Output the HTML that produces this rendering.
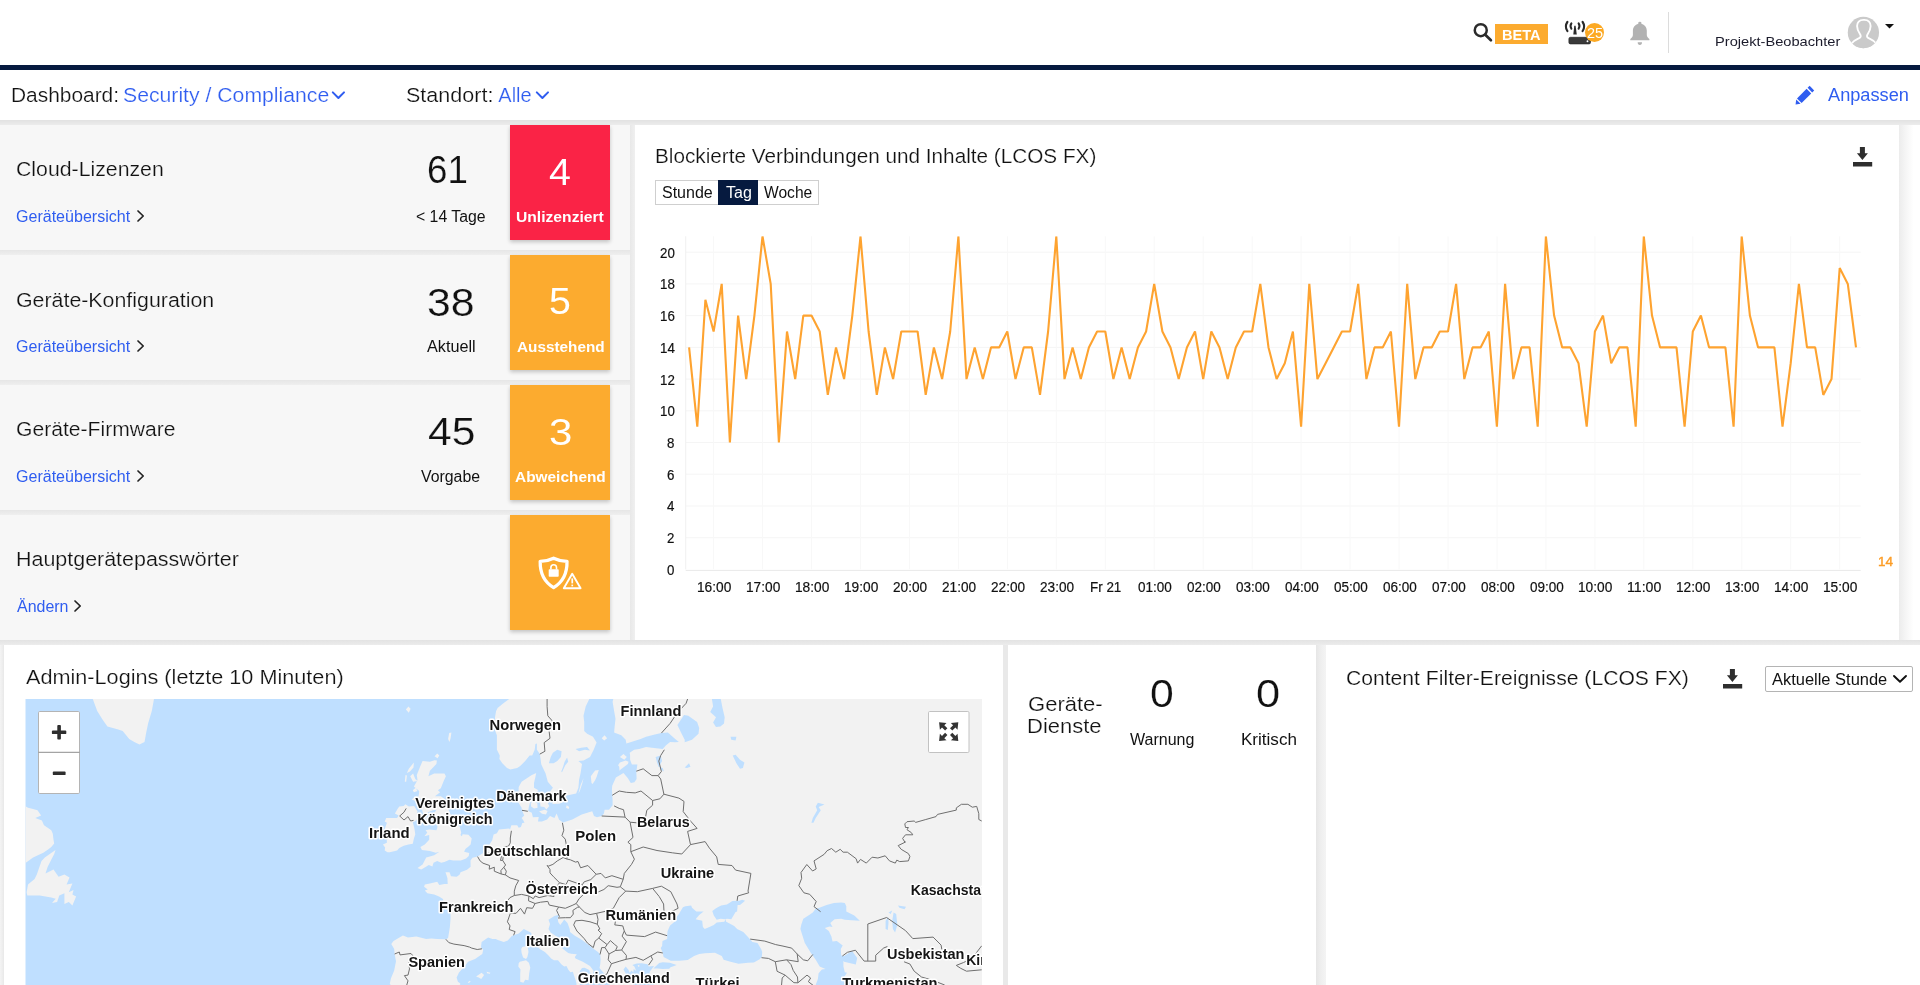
<!DOCTYPE html>
<html lang="de"><head><meta charset="utf-8"><title>Dashboard</title>
<style>
*{box-sizing:border-box}
html,body{margin:0;padding:0}
body{width:1920px;height:985px;overflow:hidden;position:relative;background:#f7f7f7;font-family:"Liberation Sans",sans-serif;color:#212121}
.lt{-webkit-text-stroke:.2px #fff}.lc{-webkit-text-stroke:.2px #f7f7f7}.t{position:absolute;white-space:nowrap;line-height:1;display:block;transform-origin:0 0}
#app{position:absolute;left:0;top:0;width:1920px;height:985px;overflow:hidden;will-change:transform}
.abs{position:absolute}
svg{position:absolute;overflow:visible}
.panel{position:absolute;background:#fff}
.card{position:absolute;left:0;width:630px;height:125px;background:#f7f7f7}
.tile{position:absolute;left:510px;width:100px;height:115px;box-shadow:0 2px 4px rgba(0,0,0,.22)}
</style></head>
<body>
<main id="app">
<div class="abs" style="left:0;top:0;width:1920px;height:985px;background:#e9e9e9"></div>
<header class="abs" style="left:0;top:0;width:1920px;height:65px;background:#fff"></header>
<div class="abs" style="left:0;top:65px;width:1920px;height:5px;background:#061a3f"></div>
<nav class="abs" style="left:0;top:70px;width:1920px;height:50px;background:#fff"></nav>
<div class="abs" style="left:0;top:120px;width:1920px;height:5px;background:linear-gradient(#e2e2e2,#ececec)"></div>
<svg style="left:1470px;top:19px" width="26" height="26" viewBox="0 0 26 26"><circle cx="10.75" cy="11.2" r="6.0" fill="none" stroke="#2b2b2b" stroke-width="2.5"/><path d="M15.3 15.8 L20.9 21.3" stroke="#2b2b2b" stroke-width="2.7" stroke-linecap="round"/></svg>
<div class="abs" style="left:1495px;top:24px;width:53px;height:20px;background:#fcab2f"></div>
<span class="t" style="left:1502.26px;top:26.80px;font-size:15.5px;color:#fff;font-weight:700;transform:scaleX(0.9413);">BETA</span>
<svg style="left:1560px;top:16px" width="36" height="32" viewBox="1560 16 36 32">
<rect x="1568.9" y="37.3" width="21.6" height="6.6" rx="1.5" fill="#3a3a3a" stroke="#2a2a2a" stroke-width="0.7"/>
<circle cx="1587.5" cy="41.3" r="0.95" fill="#fff"/>
<path d="M1574.3 25.8 L1575.6 25.8 L1576.8 34.6 L1573.3 34.6 Z" fill="#2a2a2a"/>
<path d="M1571.4 23.4 Q1569.6 26 1571.4 28.7 M1578.6 23.4 Q1580.4 26 1578.6 28.7" fill="none" stroke="#2a2a2a" stroke-width="2" stroke-linecap="round"/>
<path d="M1567.4 21.8 Q1564.4 26.4 1567.4 31 M1582.6 21.8 Q1585.6 26.4 1582.6 31" fill="none" stroke="#2a2a2a" stroke-width="2.2" stroke-linecap="round"/>
</svg>
<div class="abs" style="left:1584.8px;top:22.9px;width:19.5px;height:19.5px;border-radius:50%;background:#fca923"></div>
<span class="t" style="left:1586.53px;top:26.10px;font-size:14px;color:#fff;transform:scaleX(1.0316);">25</span>
<svg style="left:1626px;top:18px" width="28" height="30" viewBox="1626 18 28 30">
<path d="M1638.3 22.7 Q1638.3 21.8 1639.85 21.8 Q1641.4 21.8 1641.4 22.7 L1641.4 23.7 C1644.6 24.6 1646.8 27.2 1646.8 30.6 L1646.8 34.8 C1646.8 36.6 1647.7 37.6 1649.4 39 L1649.4 40.3 L1630.3 40.3 L1630.3 39 C1632 37.6 1632.9 36.6 1632.9 34.8 L1632.9 30.6 C1632.9 27.2 1635.1 24.6 1638.3 23.7 Z" fill="#b2b2b2"/>
<path d="M1637.7 42.2 L1642 42.2 A2.15 2.7 0 0 1 1637.7 42.2 Z" fill="#b2b2b2"/>
</svg>
<div class="abs" style="left:1668px;top:12px;width:1px;height:41px;background:#dcdcdc"></div>
<span class="t" style="left:1714.87px;top:35.00px;font-size:13px;color:#1b1b2b;transform:scaleX(1.1260);">Projekt-Beobachter</span>
<svg style="left:1847px;top:16px" width="33" height="33" viewBox="0 0 33 33">
<defs><clipPath id="avc"><circle cx="16.4" cy="16.5" r="15.65"/></clipPath></defs>
<circle cx="16.4" cy="16.5" r="15.65" fill="#cacaca"/>
<g clip-path="url(#avc)"><path d="M16.85 3.9 C12.2 3.7 10 6.4 10.1 10.2 C10.2 13.4 11.4 15.8 12.8 17.8 C13.8 19.2 14 20.4 13.2 21.4 C12 23 7 23.4 4.4 27.8 L3 34 L30.7 34 L29.3 27.8 C26.7 23.4 21.7 23 20.5 21.4 C19.7 20.4 19.9 19.2 20.9 17.8 C22.3 15.8 23.5 13.4 23.6 10.2 C23.7 6.4 21.5 3.7 16.85 3.9 Z" fill="#cacaca" stroke="#fff" stroke-width="1.9"/></g>
</svg>
<svg style="left:1885px;top:24px" width="10" height="6" viewBox="0 0 10 6"><path d="M0 0 L9 0 L4.5 4.6 Z" fill="#111"/></svg>
<span class="t lt" style="left:11.30px;top:85.10px;font-size:20px;color:#121212;transform:scaleX(1.0450);">Dashboard:</span>
<span class="t lt" style="left:123.47px;top:85.10px;font-size:20px;color:#2f5df0;transform:scaleX(1.0604);">Security / Compliance</span>
<svg style="left:331px;top:90px" width="15" height="11" viewBox="0 0 15 11"><path d="M1.8 2.4 L7.4 8 L13 2.4" fill="none" stroke="#2f5df0" stroke-width="2" stroke-linecap="round" stroke-linejoin="round"/></svg>
<span class="t lt" style="left:406.06px;top:85.10px;font-size:20px;color:#121212;transform:scaleX(1.0764);">Standort:</span>
<span class="t lt" style="left:498.30px;top:85.10px;font-size:20px;color:#2f5df0;transform:scaleX(1.0000);">Alle</span>
<svg style="left:535px;top:90px" width="15" height="11" viewBox="0 0 15 11"><path d="M1.8 2.4 L7.4 8 L13 2.4" fill="none" stroke="#2f5df0" stroke-width="2" stroke-linecap="round" stroke-linejoin="round"/></svg>
<svg style="left:1794px;top:84px" width="22" height="22" viewBox="0 0 22 22">
<g fill="#2f5df0"><path d="M15.6 1.8 L20.2 6.4 L18.2 8.4 L13.6 3.8 Z"/><path d="M12.6 4.8 L17.2 9.4 L7.6 19 L3 14.4 Z"/><path d="M2.2 15.4 L6.6 19.8 L1.6 20.4 Z"/></g></svg>
<span class="t" style="left:1827.80px;top:87.00px;font-size:17.5px;color:#2f5df0;transform:scaleX(1.0397);">Anpassen</span>
<div class="abs" style="left:630px;top:125px;width:5px;height:515px;background:linear-gradient(90deg,#e8e8e8,#f0f0f0)"></div>
<section class="card" style="top:125px"></section>
<div class="abs" style="left:0;top:250px;width:630px;height:5px;background:linear-gradient(#e6e6e6,#efefef)"></div>
<span class="t lc" style="left:16.21px;top:159.90px;font-size:19.5px;color:#121212;transform:scaleX(1.0904);">Cloud-Lizenzen</span>
<span class="t" style="left:16.45px;top:208.60px;font-size:16px;color:#2f5df0;transform:scaleX(1.0027);">Geräteübersicht</span>
<svg style="left:135.2px;top:209px" width="12" height="14" viewBox="0 0 12 14"><path d="M3 2 L8.2 7 L3 12" fill="none" stroke="#222" stroke-width="1.7" stroke-linecap="round" stroke-linejoin="round"/></svg>
<span class="t lc" style="left:427.19px;top:150.90px;font-size:38px;color:#111;transform:scaleX(0.9662);">61</span>
<span class="t" style="left:415.66px;top:208.60px;font-size:16px;color:#111;transform:scaleX(0.9870);">&lt; 14 Tage</span>
<div class="tile" style="top:125px;background:#fa2346"></div>
<span class="t" style="left:549.07px;top:154.00px;font-size:37px;color:#fff;transform:scaleX(1.0631);">4</span>
<span class="t" style="left:515.62px;top:208.60px;font-size:15.5px;color:#fff;font-weight:700;transform:scaleX(1.0093);">Unlizenziert</span>
<section class="card" style="top:255px"></section>
<div class="abs" style="left:0;top:380px;width:630px;height:5px;background:linear-gradient(#e6e6e6,#efefef)"></div>
<span class="t lc" style="left:16.21px;top:290.60px;font-size:19.5px;color:#121212;transform:scaleX(1.0948);">Geräte-Konfiguration</span>
<span class="t" style="left:16.45px;top:338.60px;font-size:16px;color:#2f5df0;transform:scaleX(1.0027);">Geräteübersicht</span>
<svg style="left:135.2px;top:339px" width="12" height="14" viewBox="0 0 12 14"><path d="M3 2 L8.2 7 L3 12" fill="none" stroke="#222" stroke-width="1.7" stroke-linecap="round" stroke-linejoin="round"/></svg>
<span class="t lc" style="left:427.31px;top:283.80px;font-size:38px;color:#111;transform:scaleX(1.1246);">38</span>
<span class="t" style="left:426.60px;top:338.60px;font-size:16px;color:#111;transform:scaleX(1.0128);">Aktuell</span>
<div class="tile" style="top:255px;background:#fcab2f"></div>
<span class="t" style="left:549.11px;top:283.30px;font-size:37px;color:#fff;transform:scaleX(1.0629);">5</span>
<span class="t" style="left:516.63px;top:338.60px;font-size:15.5px;color:#fff;font-weight:700;transform:scaleX(0.9877);">Ausstehend</span>
<section class="card" style="top:385px"></section>
<div class="abs" style="left:0;top:510px;width:630px;height:5px;background:linear-gradient(#e6e6e6,#efefef)"></div>
<span class="t lc" style="left:16.22px;top:420.40px;font-size:19.5px;color:#121212;transform:scaleX(1.0825);">Geräte-Firmware</span>
<span class="t" style="left:16.45px;top:468.60px;font-size:16px;color:#2f5df0;transform:scaleX(1.0027);">Geräteübersicht</span>
<svg style="left:135.2px;top:469px" width="12" height="14" viewBox="0 0 12 14"><path d="M3 2 L8.2 7 L3 12" fill="none" stroke="#222" stroke-width="1.7" stroke-linecap="round" stroke-linejoin="round"/></svg>
<span class="t lc" style="left:427.62px;top:413.20px;font-size:38px;color:#111;transform:scaleX(1.1220);">45</span>
<span class="t" style="left:420.98px;top:468.60px;font-size:16px;color:#111;transform:scaleX(0.9902);">Vorgabe</span>
<div class="tile" style="top:385px;background:#fcab2f"></div>
<span class="t" style="left:548.54px;top:413.70px;font-size:37px;color:#fff;transform:scaleX(1.1348);">3</span>
<span class="t" style="left:514.83px;top:468.60px;font-size:15.5px;color:#fff;font-weight:700;transform:scaleX(0.9944);">Abweichend</span>
<section class="card" style="top:515px"></section>
<span class="t lc" style="left:15.51px;top:549.80px;font-size:19.5px;color:#121212;transform:scaleX(1.0994);">Hauptgerätepasswörter</span>
<span class="t" style="left:16.90px;top:598.60px;font-size:16px;color:#2f5df0;transform:scaleX(0.9975);">Ändern</span>
<svg style="left:72.2px;top:599px" width="12" height="14" viewBox="0 0 12 14"><path d="M3 2 L8.2 7 L3 12" fill="none" stroke="#222" stroke-width="1.7" stroke-linecap="round" stroke-linejoin="round"/></svg>
<div class="tile" style="top:515px;background:#fcab2f"></div>
<svg style="left:536px;top:554px" width="50" height="40" viewBox="0 0 50 40">
<path d="M17.6 4.2 C13.2 6.4 8.6 7.2 4.2 7.4 C4 17 6.4 27 17.6 33.6 C28.8 27 31.2 17 31 7.4 C26.6 7.2 22 6.4 17.6 4.2 Z" fill="none" stroke="#fff" stroke-width="3.3" stroke-linejoin="round"/>
<rect x="12.7" y="15.2" width="10" height="7.6" rx="0.8" fill="#fff"/>
<path d="M14.9 15.6 L14.9 13.6 A2.8 2.8 0 0 1 20.5 13.6 L20.5 15.6" fill="none" stroke="#fff" stroke-width="1.6"/>
<path d="M36.2 17.6 L46.4 35.2 L26 35.2 Z" fill="#fcab2f" stroke="#fcab2f" stroke-width="3" stroke-linejoin="round"/>
<path d="M36.2 19.8 L44.6 34.2 L27.8 34.2 Z" fill="none" stroke="#fff" stroke-width="1.9" stroke-linejoin="round"/>
<rect x="35.4" y="24.4" width="1.7" height="5" fill="#fff"/><rect x="35.4" y="30.6" width="1.7" height="1.7" fill="#fff"/>
</svg>
<section class="panel" style="left:635px;top:125px;width:1264px;height:515px"></section>
<div class="abs" style="left:1899px;top:125px;width:21px;height:515px;background:linear-gradient(90deg,#ececec 0,#f6f6f6 35%,#fff 70%)"></div>
<div class="abs" style="left:0;top:640px;width:1920px;height:5px;background:linear-gradient(#e3e3e3,#ececec)"></div>
<span class="t lt" style="left:654.82px;top:146.40px;font-size:20px;color:#121212;transform:scaleX(1.0365);">Blockierte Verbindungen und Inhalte (LCOS FX)</span>
<div class="abs" style="left:655px;top:180px;width:164px;height:25px;border:1px solid #cfcfcf;background:#fff"></div>
<div class="abs" style="left:718px;top:180px;width:40px;height:25px;background:#061a3f"></div>
<span class="t" style="left:661.75px;top:184.50px;font-size:16px;color:#111;transform:scaleX(1.0005);">Stunde</span>
<span class="t" style="left:725.82px;top:184.50px;font-size:16px;color:#fff;transform:scaleX(1.0010);">Tag</span>
<span class="t" style="left:764.28px;top:184.50px;font-size:16px;color:#111;transform:scaleX(0.9744);">Woche</span>
<svg style="left:1852.8px;top:147.2px" width="20" height="20" viewBox="0 0 20 20"><path d="M6.9 0 L11.9 0 L11.9 6.2 L14.9 6.2 L9.4 12.9 L3.9 6.2 L6.9 6.2 Z" fill="#2e2e2e"/><rect x="0" y="15" width="19.2" height="4.5" fill="#2e2e2e"/></svg>
<svg style="left:0;top:0" width="1920" height="985" viewBox="0 0 1920 985"><path d="M685.7 570.4 H1860.7" stroke="#e9e9e9" stroke-width="1" fill="none"/><path d="M685.7 537.7 H1860.7" stroke="#f5f5f5" stroke-width="1" fill="none"/><path d="M685.7 506.0 H1860.7" stroke="#f5f5f5" stroke-width="1" fill="none"/><path d="M685.7 474.2 H1860.7" stroke="#f5f5f5" stroke-width="1" fill="none"/><path d="M685.7 442.5 H1860.7" stroke="#f5f5f5" stroke-width="1" fill="none"/><path d="M685.7 410.8 H1860.7" stroke="#f5f5f5" stroke-width="1" fill="none"/><path d="M685.7 379.1 H1860.7" stroke="#f5f5f5" stroke-width="1" fill="none"/><path d="M685.7 347.4 H1860.7" stroke="#f5f5f5" stroke-width="1" fill="none"/><path d="M685.7 315.6 H1860.7" stroke="#f5f5f5" stroke-width="1" fill="none"/><path d="M685.7 283.9 H1860.7" stroke="#f5f5f5" stroke-width="1" fill="none"/><path d="M685.7 252.2 H1860.7" stroke="#f5f5f5" stroke-width="1" fill="none"/><path d="M713.6 236.3 V569.4" stroke="#f8f8f8" stroke-width="1" fill="none"/><path d="M762.6 236.3 V569.4" stroke="#f8f8f8" stroke-width="1" fill="none"/><path d="M811.5 236.3 V569.4" stroke="#f8f8f8" stroke-width="1" fill="none"/><path d="M860.5 236.3 V569.4" stroke="#f8f8f8" stroke-width="1" fill="none"/><path d="M909.4 236.3 V569.4" stroke="#f8f8f8" stroke-width="1" fill="none"/><path d="M958.4 236.3 V569.4" stroke="#f8f8f8" stroke-width="1" fill="none"/><path d="M1007.4 236.3 V569.4" stroke="#f8f8f8" stroke-width="1" fill="none"/><path d="M1056.3 236.3 V569.4" stroke="#f8f8f8" stroke-width="1" fill="none"/><path d="M1105.3 236.3 V569.4" stroke="#f8f8f8" stroke-width="1" fill="none"/><path d="M1154.2 236.3 V569.4" stroke="#f8f8f8" stroke-width="1" fill="none"/><path d="M1203.2 236.3 V569.4" stroke="#f8f8f8" stroke-width="1" fill="none"/><path d="M1252.2 236.3 V569.4" stroke="#f8f8f8" stroke-width="1" fill="none"/><path d="M1301.1 236.3 V569.4" stroke="#f8f8f8" stroke-width="1" fill="none"/><path d="M1350.1 236.3 V569.4" stroke="#f8f8f8" stroke-width="1" fill="none"/><path d="M1399.0 236.3 V569.4" stroke="#f8f8f8" stroke-width="1" fill="none"/><path d="M1448.0 236.3 V569.4" stroke="#f8f8f8" stroke-width="1" fill="none"/><path d="M1497.0 236.3 V569.4" stroke="#f8f8f8" stroke-width="1" fill="none"/><path d="M1545.9 236.3 V569.4" stroke="#f8f8f8" stroke-width="1" fill="none"/><path d="M1594.9 236.3 V569.4" stroke="#f8f8f8" stroke-width="1" fill="none"/><path d="M1643.8 236.3 V569.4" stroke="#f8f8f8" stroke-width="1" fill="none"/><path d="M1692.8 236.3 V569.4" stroke="#f8f8f8" stroke-width="1" fill="none"/><path d="M1741.8 236.3 V569.4" stroke="#f8f8f8" stroke-width="1" fill="none"/><path d="M1790.7 236.3 V569.4" stroke="#f8f8f8" stroke-width="1" fill="none"/><path d="M1839.7 236.3 V569.4" stroke="#f8f8f8" stroke-width="1" fill="none"/><path d="M685.7 236.3 V569.4" stroke="#f0f0f0" stroke-width="1" fill="none"/><defs><clipPath id="pc"><rect x="680" y="236.3" width="1190" height="340"/></clipPath></defs><polyline clip-path="url(#pc)" points="689.1,347.4 697.3,426.7 705.4,299.8 713.6,331.5 721.7,283.9 729.9,442.5 738.1,315.6 746.2,379.1 754.4,315.6 762.5,236.3 770.7,283.9 778.9,442.5 787.0,331.5 795.2,379.1 803.3,315.6 811.5,315.6 819.7,331.5 827.8,394.9 836.0,347.4 844.1,379.1 852.3,315.6 860.5,236.3 868.6,331.5 876.8,394.9 884.9,347.4 893.1,379.1 901.3,331.5 909.4,331.5 917.6,331.5 925.7,394.9 933.9,347.4 942.1,379.1 950.2,331.5 958.4,236.3 966.5,379.1 974.7,347.4 982.9,379.1 991.0,347.4 999.2,347.4 1007.3,331.5 1015.5,379.1 1023.7,347.4 1031.8,347.4 1040.0,394.9 1048.1,331.5 1056.3,236.3 1064.5,379.1 1072.6,347.4 1080.8,379.1 1088.9,347.4 1097.1,331.5 1105.3,331.5 1113.4,379.1 1121.6,347.4 1129.7,379.1 1137.9,347.4 1146.1,331.5 1154.2,283.9 1162.4,331.5 1170.5,347.4 1178.7,379.1 1186.9,347.4 1195.0,331.5 1203.2,379.1 1211.3,331.5 1219.5,347.4 1227.7,379.1 1235.8,347.4 1244.0,331.5 1252.1,331.5 1260.3,283.9 1268.5,347.4 1276.6,379.1 1284.8,363.2 1292.9,331.5 1301.1,426.7 1309.3,283.9 1317.4,379.1 1325.6,363.2 1333.7,347.4 1341.9,331.5 1350.1,331.5 1358.2,283.9 1366.4,379.1 1374.5,347.4 1382.7,347.4 1390.9,331.5 1399.0,426.7 1407.2,283.9 1415.3,379.1 1423.5,347.4 1431.7,347.4 1439.8,331.5 1448.0,331.5 1456.1,283.9 1464.3,379.1 1472.5,347.4 1480.6,347.4 1488.8,331.5 1496.9,426.7 1505.1,283.9 1513.3,379.1 1521.4,347.4 1529.6,347.4 1537.7,426.7 1545.9,236.3 1554.1,315.6 1562.2,347.4 1570.4,347.4 1578.5,363.2 1586.7,426.7 1594.9,331.5 1603.0,315.6 1611.2,363.2 1619.3,347.4 1627.5,347.4 1635.7,426.7 1643.8,236.3 1652.0,315.6 1660.1,347.4 1668.3,347.4 1676.5,347.4 1684.6,426.7 1692.8,331.5 1700.9,315.6 1709.1,347.4 1717.3,347.4 1725.4,347.4 1733.6,426.7 1741.7,236.3 1749.9,315.6 1758.1,347.4 1766.2,347.4 1774.4,347.4 1782.5,426.7 1790.7,363.2 1798.9,283.9 1807.0,347.4 1815.2,347.4 1823.3,394.9 1831.5,379.1 1839.7,268.1 1847.8,283.9 1856.0,347.4" fill="none" stroke="#fea330" stroke-width="2.1" stroke-linejoin="bevel"/></svg>
<span class="t" style="left:667.11px;top:562.90px;font-size:14px;color:#111;transform:scaleX(0.9500);-webkit-text-stroke:.2px #111;">0</span>
<span class="t" style="left:667.23px;top:531.18px;font-size:14px;color:#111;transform:scaleX(0.9500);-webkit-text-stroke:.2px #111;">2</span>
<span class="t" style="left:666.99px;top:499.46px;font-size:14px;color:#111;transform:scaleX(0.9500);-webkit-text-stroke:.2px #111;">4</span>
<span class="t" style="left:667.23px;top:467.74px;font-size:14px;color:#111;transform:scaleX(0.9500);-webkit-text-stroke:.2px #111;">6</span>
<span class="t" style="left:667.11px;top:436.02px;font-size:14px;color:#111;transform:scaleX(0.9500);-webkit-text-stroke:.2px #111;">8</span>
<span class="t" style="left:659.75px;top:404.30px;font-size:14px;color:#111;transform:scaleX(0.9500);-webkit-text-stroke:.2px #111;">10</span>
<span class="t" style="left:659.87px;top:372.58px;font-size:14px;color:#111;transform:scaleX(0.9500);-webkit-text-stroke:.2px #111;">12</span>
<span class="t" style="left:659.63px;top:340.86px;font-size:14px;color:#111;transform:scaleX(0.9500);-webkit-text-stroke:.2px #111;">14</span>
<span class="t" style="left:659.87px;top:309.14px;font-size:14px;color:#111;transform:scaleX(0.9500);-webkit-text-stroke:.2px #111;">16</span>
<span class="t" style="left:659.75px;top:277.42px;font-size:14px;color:#111;transform:scaleX(0.9500);-webkit-text-stroke:.2px #111;">18</span>
<span class="t" style="left:659.75px;top:245.70px;font-size:14px;color:#111;transform:scaleX(0.9500);-webkit-text-stroke:.2px #111;">20</span>
<span class="t" style="left:696.72px;top:580.30px;font-size:14px;color:#111;transform:scaleX(0.9791);-webkit-text-stroke:.2px #111;">16:00</span>
<span class="t" style="left:745.68px;top:580.30px;font-size:14px;color:#111;transform:scaleX(0.9791);-webkit-text-stroke:.2px #111;">17:00</span>
<span class="t" style="left:794.64px;top:580.30px;font-size:14px;color:#111;transform:scaleX(0.9791);-webkit-text-stroke:.2px #111;">18:00</span>
<span class="t" style="left:843.60px;top:580.30px;font-size:14px;color:#111;transform:scaleX(0.9791);-webkit-text-stroke:.2px #111;">19:00</span>
<span class="t" style="left:892.81px;top:580.30px;font-size:14px;color:#111;transform:scaleX(0.9719);-webkit-text-stroke:.2px #111;">20:00</span>
<span class="t" style="left:941.77px;top:580.30px;font-size:14px;color:#111;transform:scaleX(0.9719);-webkit-text-stroke:.2px #111;">21:00</span>
<span class="t" style="left:990.73px;top:580.30px;font-size:14px;color:#111;transform:scaleX(0.9719);-webkit-text-stroke:.2px #111;">22:00</span>
<span class="t" style="left:1039.69px;top:580.30px;font-size:14px;color:#111;transform:scaleX(0.9719);-webkit-text-stroke:.2px #111;">23:00</span>
<span class="t" style="left:1089.90px;top:580.30px;font-size:14px;color:#111;transform:scaleX(0.9587);-webkit-text-stroke:.2px #111;">Fr 21</span>
<span class="t" style="left:1137.86px;top:580.30px;font-size:14px;color:#111;transform:scaleX(0.9647);-webkit-text-stroke:.2px #111;">01:00</span>
<span class="t" style="left:1186.82px;top:580.30px;font-size:14px;color:#111;transform:scaleX(0.9647);-webkit-text-stroke:.2px #111;">02:00</span>
<span class="t" style="left:1235.78px;top:580.30px;font-size:14px;color:#111;transform:scaleX(0.9647);-webkit-text-stroke:.2px #111;">03:00</span>
<span class="t" style="left:1284.74px;top:580.30px;font-size:14px;color:#111;transform:scaleX(0.9647);-webkit-text-stroke:.2px #111;">04:00</span>
<span class="t" style="left:1333.70px;top:580.30px;font-size:14px;color:#111;transform:scaleX(0.9647);-webkit-text-stroke:.2px #111;">05:00</span>
<span class="t" style="left:1382.66px;top:580.30px;font-size:14px;color:#111;transform:scaleX(0.9647);-webkit-text-stroke:.2px #111;">06:00</span>
<span class="t" style="left:1431.62px;top:580.30px;font-size:14px;color:#111;transform:scaleX(0.9647);-webkit-text-stroke:.2px #111;">07:00</span>
<span class="t" style="left:1480.58px;top:580.30px;font-size:14px;color:#111;transform:scaleX(0.9647);-webkit-text-stroke:.2px #111;">08:00</span>
<span class="t" style="left:1529.54px;top:580.30px;font-size:14px;color:#111;transform:scaleX(0.9647);-webkit-text-stroke:.2px #111;">09:00</span>
<span class="t" style="left:1578.00px;top:580.30px;font-size:14px;color:#111;transform:scaleX(0.9791);-webkit-text-stroke:.2px #111;">10:00</span>
<span class="t" style="left:1626.93px;top:580.30px;font-size:14px;color:#111;transform:scaleX(1.0092);-webkit-text-stroke:.2px #111;">11:00</span>
<span class="t" style="left:1675.92px;top:580.30px;font-size:14px;color:#111;transform:scaleX(0.9791);-webkit-text-stroke:.2px #111;">12:00</span>
<span class="t" style="left:1724.88px;top:580.30px;font-size:14px;color:#111;transform:scaleX(0.9791);-webkit-text-stroke:.2px #111;">13:00</span>
<span class="t" style="left:1773.84px;top:580.30px;font-size:14px;color:#111;transform:scaleX(0.9791);-webkit-text-stroke:.2px #111;">14:00</span>
<span class="t" style="left:1822.80px;top:580.30px;font-size:14px;color:#111;transform:scaleX(0.9791);-webkit-text-stroke:.2px #111;">15:00</span>
<span class="t" style="left:1878.30px;top:554.90px;font-size:13.5px;color:#fc9d27;transform:scaleX(0.9982);-webkit-text-stroke:.4px #fc9d27;">14</span>
<div class="abs" style="left:0;top:645px;width:5px;height:340px;background:linear-gradient(90deg,#f4f4f4,#ececec 60%,#e4e4e4)"></div>
<section class="panel" style="left:4px;top:645px;width:999px;height:340px"></section>
<section class="panel" style="left:1008px;top:645px;width:308px;height:340px"></section>
<section class="panel" style="left:1326px;top:645px;width:594px;height:340px"></section>
<div class="abs" style="left:1316px;top:645px;width:10px;height:340px;background:linear-gradient(90deg,#e6e6e6,#efefef 50%,#f4f4f4)"></div>
<span class="t lt" style="left:25.90px;top:667.30px;font-size:20px;color:#121212;transform:scaleX(1.0823);">Admin-Logins (letzte 10 Minuten)</span>
<span class="t lt" style="left:1028.07px;top:694.80px;font-size:19.5px;color:#121212;transform:scaleX(1.1300);">Geräte-</span>
<span class="t lt" style="left:1027.37px;top:717.00px;font-size:19.5px;color:#121212;transform:scaleX(1.1285);">Dienste</span>
<span class="t lt" style="left:1149.73px;top:675.30px;font-size:38.5px;color:#111;transform:scaleX(1.1102);">0</span>
<span class="t lt" style="left:1256.01px;top:675.30px;font-size:38.5px;color:#111;transform:scaleX(1.1265);">0</span>
<span class="t" style="left:1130.07px;top:731.80px;font-size:16px;color:#111;transform:scaleX(1.0012);">Warnung</span>
<span class="t" style="left:1240.67px;top:731.80px;font-size:16px;color:#111;transform:scaleX(1.0653);">Kritisch</span>
<span class="t lt" style="left:1345.94px;top:668.20px;font-size:20px;color:#121212;transform:scaleX(1.0563);">Content Filter-Ereignisse (LCOS FX)</span>
<svg style="left:1723.4px;top:669.2px" width="20" height="20" viewBox="0 0 20 20"><path d="M6.9 0 L11.9 0 L11.9 6.2 L14.9 6.2 L9.4 12.9 L3.9 6.2 L6.9 6.2 Z" fill="#2e2e2e"/><rect x="0" y="15" width="19.2" height="4.5" fill="#2e2e2e"/></svg>
<div class="abs" style="left:1765px;top:666px;width:148px;height:26px;border:1px solid #b4b4b4;border-radius:2px;background:#fff"></div>
<span class="t" style="left:1772.00px;top:671.80px;font-size:16px;color:#111;transform:scaleX(1.0281);">Aktuelle Stunde</span>
<svg style="left:1892px;top:674px" width="16" height="10" viewBox="0 0 16 10"><path d="M2 2 L8 7.8 L14 2" fill="none" stroke="#111" stroke-width="1.9" stroke-linecap="round" stroke-linejoin="round"/></svg>
<style>#map text{font:700 15px "Liberation Sans",sans-serif}#map text.h{fill:#fff;stroke:#fff;stroke-width:3px;stroke-linejoin:round}#map text.f{fill:#151515}</style>
<svg id="map" style="left:25px;top:699px" width="957" height="286" viewBox="25 699 957 286"><defs><clipPath id="mc"><rect x="25.5" y="699" width="956.5" height="286"/></clipPath></defs><g clip-path="url(#mc)"><rect x="25" y="699" width="957" height="286" fill="#bfdfff"/><path d="M613.3 687.3 L613.3 699.0 L612.6 701.7 L614.1 711.1 L615.5 718.8 L614.8 724.9 L614.1 732.4 L621.3 735.3 L625.7 739.7 L626.4 743.4 L640.6 739.0 L646.1 736.8 L654.8 734.6 L661.4 733.1 L667.9 732.4 L675.2 739.0 L678.9 741.9 L675.2 742.2 L670.1 741.9 L665.8 745.5 L662.8 749.1 L651.9 747.7 L646.1 747.0 L639.2 749.1 L634.1 749.8 L629.7 752.7 L630.1 755.5 L630.1 759.7 L631.9 764.6 L637.4 764.6 L636.3 771.5 L636.6 779.0 L634.4 782.3 L630.8 783.0 L627.9 778.3 L623.5 772.9 L615.9 777.6 L612.2 785.7 L611.9 789.6 L612.2 794.9 L612.6 800.1 L612.6 805.2 L609.0 809.7 L604.6 809.7 L603.9 813.5 L601.7 816.0 L597.0 817.2 L594.0 816.0 L592.2 811.2 L581.7 814.4 L572.3 819.4 L563.1 822.5 L559.1 819.7 L556.6 813.5 L554.4 817.9 L550.0 816.0 L547.1 819.5 L542.0 821.6 L538.0 821.6 L538.7 816.9 L532.9 817.2 L531.8 812.8 L528.2 811.0 L528.9 806.5 L530.0 802.7 L531.8 800.1 L533.6 794.2 L538.4 790.3 L534.0 787.7 L534.0 783.0 L535.4 777.0 L536.2 773.0 L531.4 775.2 L521.6 781.7 L518.7 787.0 L518.3 796.2 L518.0 802.0 L521.6 807.8 L522.0 810.3 L524.2 815.4 L521.6 817.9 L523.4 820.4 L524.5 822.8 L522.3 823.1 L520.9 827.1 L518.7 827.7 L517.2 825.3 L511.4 825.3 L510.0 829.6 L509.2 828.4 L499.0 829.6 L496.9 833.2 L493.6 834.4 L492.1 840.4 L488.1 846.4 L485.2 852.3 L482.3 853.4 L477.6 856.6 L472.5 857.8 L470.5 860.4 L470.6 866.7 L467.0 869.7 L460.5 872.3 L459.7 874.6 L456.8 876.8 L451.0 876.2 L449.5 872.3 L445.5 872.3 L447.4 877.9 L447.7 884.0 L444.4 884.0 L439.3 885.1 L437.2 881.8 L429.9 883.5 L424.8 884.6 L424.1 886.8 L427.7 889.5 L424.8 890.6 L427.3 893.3 L434.2 894.4 L439.0 896.5 L443.0 899.0 L443.3 901.4 L445.9 907.2 L450.3 910.9 L450.6 917.7 L449.9 927.0 L448.1 938.1 L445.9 939.3 L437.2 939.1 L431.3 938.4 L426.2 939.1 L416.4 936.6 L408.0 937.6 L402.9 935.6 L398.6 938.1 L393.5 941.1 L391.3 944.1 L394.2 949.1 L394.6 954.0 L396.0 961.3 L394.2 970.4 L390.9 978.4 L389.8 983.8 L392.0 986.4 L392.0 995.6 L458.3 995.6 L458.3 986.4 L460.5 984.1 L459.7 983.1 L457.9 981.7 L456.6 977.5 L459.0 972.6 L465.2 965.6 L468.1 961.7 L475.0 959.0 L482.3 954.0 L483.2 949.8 L481.2 948.1 L481.1 946.1 L481.6 942.1 L484.5 940.1 L488.1 937.6 L492.5 939.1 L495.8 939.1 L497.9 940.1 L503.8 942.1 L507.8 940.6 L511.8 936.1 L513.6 935.3 L518.7 933.6 L523.8 928.9 L530.7 932.6 L534.0 937.6 L535.4 943.6 L539.8 949.1 L544.9 952.0 L548.5 955.4 L551.1 958.4 L554.0 960.3 L558.0 960.3 L561.3 964.2 L564.2 966.6 L566.5 965.9 L568.2 969.4 L570.4 972.3 L572.9 971.8 L574.0 975.6 L575.8 980.8 L576.6 984.1 L575.5 988.2 L579.8 988.2 L579.8 982.7 L583.9 981.2 L583.5 978.0 L579.8 975.6 L579.8 971.3 L582.0 968.0 L584.6 967.8 L589.3 969.9 L590.0 972.5 L592.6 974.2 L593.7 970.9 L590.0 966.1 L582.8 961.7 L575.5 958.4 L574.8 956.9 L576.8 954.2 L571.1 953.8 L568.2 953.0 L562.4 948.4 L559.1 943.1 L557.3 936.9 L550.7 932.6 L548.5 929.0 L550.0 923.9 L548.5 919.8 L554.4 916.1 L558.0 915.1 L559.2 916.1 L557.6 917.7 L558.2 922.0 L560.2 924.9 L562.7 921.8 L564.2 919.5 L567.5 922.9 L569.7 929.0 L570.0 932.1 L574.8 935.8 L578.8 938.1 L582.8 940.6 L586.0 943.1 L590.8 946.6 L593.7 949.1 L598.0 952.0 L600.2 954.5 L600.6 959.8 L600.2 964.6 L599.5 968.0 L603.9 973.2 L606.1 976.5 L609.7 981.7 L610.1 985.5 L611.2 988.2 L634.4 988.2 L634.4 985.0 L628.6 981.2 L627.2 978.9 L625.7 973.2 L623.5 969.4 L625.7 966.4 L628.6 969.9 L629.7 972.8 L631.5 970.4 L633.4 972.6 L633.7 968.9 L636.3 970.9 L634.4 966.6 L632.3 965.1 L636.6 963.4 L641.7 963.2 L647.6 964.3 L648.6 966.6 L654.1 966.1 L649.7 971.8 L649.7 972.5 L648.8 977.2 L652.6 977.0 L654.8 976.5 L653.4 978.9 L655.2 982.2 L653.7 985.0 L652.6 988.2 L983.2 988.2 L983.2 687.3 Z M509.2 687.3 L509.2 699.0 L503.4 703.3 L497.6 708.0 L496.1 711.1 L495.0 717.3 L495.0 724.9 L494.7 729.4 L496.9 735.3 L496.9 742.6 L496.9 749.8 L499.8 755.5 L499.4 759.0 L502.3 763.2 L507.0 768.1 L510.3 769.5 L517.2 768.1 L520.2 766.0 L525.2 761.1 L529.6 755.5 L532.2 755.5 L534.7 749.8 L535.4 744.1 L536.9 743.4 L536.9 749.8 L539.8 754.1 L540.2 756.2 L541.3 764.6 L545.6 773.6 L547.8 781.7 L552.9 787.7 L549.6 792.3 L551.5 795.5 L553.3 801.4 L552.2 804.0 L559.5 803.7 L563.1 802.0 L566.7 795.5 L572.6 794.2 L576.2 793.6 L578.4 787.7 L579.1 779.7 L580.6 772.9 L582.0 763.9 L578.4 761.1 L583.5 760.4 L590.0 756.9 L593.7 749.8 L596.6 742.6 L593.0 736.8 L587.1 733.8 L584.2 730.9 L584.2 721.9 L583.5 715.8 L585.7 706.5 L589.3 699.0 L591.5 687.3 Z M417.5 868.1 L422.6 864.4 L426.2 857.5 L434.2 855.2 L439.3 851.7 L435.7 852.8 L429.9 851.1 L421.9 849.9 L420.4 847.0 L424.8 844.6 L429.2 839.8 L429.2 835.0 L424.4 836.2 L427.3 832.6 L425.5 830.2 L429.2 829.6 L436.4 830.2 L437.2 828.4 L437.9 820.4 L435.7 820.4 L432.8 815.4 L436.4 809.7 L432.8 810.3 L427.0 812.8 L423.0 813.5 L421.9 809.1 L425.1 803.3 L423.3 797.5 L420.4 798.8 L417.1 805.2 L417.5 800.1 L419.0 793.6 L419.2 791.0 L413.9 786.6 L417.5 780.3 L416.8 774.9 L420.4 766.0 L422.6 760.9 L429.9 761.8 L434.5 760.2 L436.9 760.6 L436.4 763.9 L429.9 770.8 L428.4 776.3 L434.2 773.6 L444.4 773.6 L445.9 776.3 L443.7 781.0 L440.8 788.3 L437.9 790.3 L440.1 792.3 L435.0 796.2 L440.8 796.2 L444.4 798.8 L447.4 802.7 L448.4 809.1 L450.3 814.1 L456.1 817.9 L458.3 820.4 L457.5 825.3 L459.7 826.5 L461.2 832.6 L460.5 835.0 L461.9 836.2 L462.6 834.2 L468.5 834.7 L471.7 838.6 L470.6 844.6 L468.5 846.4 L465.6 848.7 L464.1 851.7 L469.2 853.1 L468.8 856.0 L466.1 858.4 L460.8 860.5 L453.2 860.4 L449.5 859.8 L444.4 862.1 L441.2 862.7 L437.2 860.9 L433.5 862.7 L432.4 866.4 L428.8 865.0 L422.2 868.9 L421.1 869.4 Z M405.3 804.2 L408.8 806.5 L414.2 806.1 L417.5 811.6 L416.8 813.5 L419.3 816.0 L416.0 820.4 L414.6 821.6 L412.8 822.2 L413.9 826.5 L414.6 829.6 L415.3 834.4 L413.9 838.6 L412.8 843.8 L408.4 844.4 L403.7 845.8 L399.3 848.1 L397.1 850.5 L389.8 852.3 L387.5 852.3 L384.7 850.5 L385.1 847.6 L382.9 844.6 L386.9 842.8 L386.7 839.1 L390.6 834.4 L393.8 832.0 L393.5 830.6 L386.2 829.0 L384.7 829.0 L386.9 822.8 L384.7 821.6 L386.2 817.9 L392.0 817.9 L397.1 817.9 L398.6 815.4 L394.9 813.5 L397.5 809.1 L399.3 806.5 L403.7 805.9 Z M92.1 687.3 L92.8 699.0 L97.2 711.1 L103.0 720.3 L107.4 726.4 L118.3 729.4 L122.7 730.9 L129.2 739.0 L134.3 741.9 L139.4 744.5 L144.5 741.9 L146.0 733.8 L148.1 723.4 L151.8 711.1 L154.0 699.0 L154.7 687.3 Z M14.9 800.1 L25.1 805.9 L28.0 807.8 L33.1 809.1 L37.5 810.3 L41.1 815.4 L35.3 817.9 L41.9 820.4 L44.0 825.3 L51.3 830.2 L52.8 833.8 L53.5 839.8 L54.2 843.4 L51.3 847.0 L48.4 849.3 L43.3 852.8 L33.1 857.5 L25.1 863.2 L14.9 866.7 Z M55.5 850.1 L44.8 857.5 L41.5 860.9 L36.8 874.6 L34.6 879.0 L28.0 884.6 L26.6 892.2 L27.3 895.5 L33.1 895.5 L39.7 895.5 L51.3 897.6 L55.7 898.7 L52.0 903.0 L57.1 901.9 L59.3 895.5 L64.4 893.3 L64.4 904.0 L68.8 901.9 L72.4 905.6 L76.1 896.5 L72.4 894.4 L73.5 890.0 L68.8 892.2 L72.4 883.5 L66.6 884.6 L69.5 877.4 L64.4 874.6 L58.6 876.8 L53.5 869.5 L45.5 873.4 L47.7 866.7 L50.6 860.9 L54.2 854.0 Z M406.9 772.9 L408.8 768.8 L413.9 762.5 L413.5 767.4 L409.9 771.5 Z M404.8 781.7 L405.5 774.9 L406.9 775.6 L406.2 781.7 Z M410.2 776.3 L413.1 773.6 L415.3 779.0 L417.5 781.0 L413.1 781.7 Z M412.8 790.3 L415.7 787.7 L417.5 791.0 L413.9 792.3 Z M411.7 799.4 L414.6 797.1 L417.1 796.2 L415.0 800.7 Z M424.4 820.4 L427.0 816.6 L427.7 819.1 Z M434.6 756.2 L437.2 753.4 L439.3 755.5 L437.5 758.3 Z M448.1 739.0 L449.2 733.1 L451.4 732.4 L450.6 738.3 L449.5 741.9 Z M405.9 709.6 L408.4 706.5 L410.6 708.8 L408.8 712.7 Z M530.7 802.7 L534.0 801.4 L537.3 803.3 L537.6 807.8 L534.0 808.4 L531.1 806.5 Z M539.8 800.7 L544.5 796.9 L548.5 794.6 L550.7 796.2 L550.4 801.4 L547.8 803.3 L549.3 805.9 L546.4 809.4 L544.2 807.1 L540.5 806.5 Z M539.1 811.2 L544.9 809.7 L547.5 811.0 L546.0 814.5 L542.0 813.7 Z M566.0 807.8 L566.7 805.2 L569.3 807.1 L568.6 809.1 Z M591.5 783.0 L590.8 776.3 L595.1 770.4 L598.8 770.1 L596.6 777.0 L595.1 780.3 L592.6 784.1 Z M578.4 793.6 L580.6 785.0 L583.5 778.3 L582.4 783.0 L579.8 791.0 Z M618.1 765.3 L619.9 762.5 L625.7 760.4 L628.6 761.8 L627.9 763.9 L624.3 766.7 L620.6 769.5 L619.5 770.8 L619.2 766.7 Z M619.9 756.9 L623.5 754.1 L626.8 756.9 L624.3 759.7 Z M601.7 738.3 L604.6 735.3 L607.1 738.3 L604.2 740.5 Z M527.1 943.1 L528.5 952.0 L527.4 956.9 L526.0 959.1 L523.1 957.4 L521.6 953.0 L521.2 949.1 L522.3 947.1 L526.7 946.1 Z M518.7 963.2 L519.8 961.7 L526.0 960.3 L528.9 962.7 L530.3 967.5 L529.3 972.8 L528.5 980.3 L525.2 979.8 L523.4 982.7 L520.2 981.7 L520.2 974.2 L520.5 969.4 L518.3 966.6 Z M476.1 976.5 L481.6 972.8 L484.1 975.1 L481.2 978.9 L478.7 977.5 Z M486.7 971.8 L490.3 972.8 L489.9 973.7 L487.0 973.2 Z M467.7 982.2 L469.9 980.8 L470.6 981.7 L468.8 983.1 Z M647.2 979.4 L651.2 978.4 L652.6 981.2 L649.0 981.7 Z M637.7 965.6 L639.2 964.8 L639.5 966.6 L638.1 966.7 Z M602.1 974.7 L604.2 974.2 L605.3 977.5 L603.5 977.5 Z" fill="#f2f2f2"/><path d="M670.8 960.8 L663.6 956.9 L662.8 953.0 L660.7 948.1 L662.1 946.1 L662.5 941.1 L667.2 939.1 L667.2 935.1 L667.6 931.0 L670.1 925.4 L675.2 921.3 L675.9 917.7 L678.9 914.1 L682.9 907.2 L685.4 906.2 L691.2 905.6 L692.0 907.7 L696.3 911.4 L699.2 911.4 L703.6 911.4 L699.2 915.1 L695.6 919.3 L702.2 920.8 L702.9 927.0 L704.7 929.0 L709.4 927.0 L713.8 924.9 L716.7 922.4 L724.4 921.8 L725.4 919.3 L726.2 921.8 L730.5 923.9 L734.2 925.9 L737.1 929.0 L743.3 932.1 L748.0 937.1 L752.4 942.1 L757.5 943.1 L761.1 949.1 L762.2 952.0 L761.8 956.9 L759.7 959.3 L753.8 962.4 L748.0 962.7 L738.6 963.7 L730.5 961.7 L723.6 959.8 L721.8 955.9 L714.9 952.7 L704.8 953.2 L699.2 954.0 L694.1 955.9 L687.7 960.0 L679.6 960.8 Z M725.4 919.3 L720.4 918.7 L716.7 919.8 L713.8 915.6 L712.3 910.9 L716.0 908.3 L721.1 905.6 L726.9 904.6 L732.4 901.0 L739.3 900.8 L742.2 899.8 L745.1 900.8 L740.0 905.1 L737.6 905.1 L737.1 911.4 L735.6 912.0 L733.5 915.6 L731.3 919.3 L726.9 918.7 Z M653.4 968.5 L659.2 963.0 L662.8 962.2 L669.8 962.7 L676.7 965.1 L670.1 967.5 L669.4 968.8 L662.6 968.9 L657.7 968.5 Z M548.9 763.2 L553.6 763.2 L557.3 761.1 L560.9 756.9 L561.6 751.3 L557.3 749.8 L552.9 752.7 L550.7 756.9 Z M562.0 772.2 L565.3 765.3 L568.2 761.8 L567.1 757.6 L564.6 761.8 L563.1 766.7 L561.3 771.5 Z M575.5 749.1 L581.3 747.7 L587.1 747.0 L590.0 750.6 L584.9 749.8 L579.1 751.3 Z M684.7 742.2 L692.0 739.7 L698.5 733.8 L699.2 727.9 L697.1 721.9 L688.3 715.8 L684.0 715.0 L677.4 724.9 L681.0 732.4 L684.7 739.7 Z M711.6 697.0 L720.4 697.0 L722.5 708.0 L724.7 717.3 L724.0 723.4 L720.4 726.4 L716.0 727.1 L713.1 722.6 L716.0 717.3 L710.2 711.9 L713.1 706.5 Z M730.5 736.8 L736.4 736.8 L735.6 740.5 L731.3 739.7 Z M684.7 767.4 L689.0 763.2 L690.5 766.7 L686.9 768.1 Z M655.6 756.9 L660.7 755.5 L662.1 761.1 L659.6 765.3 L660.7 769.5 L663.9 771.5 L662.8 768.1 L658.5 766.7 L657.0 762.5 Z M732.7 755.5 L735.6 754.8 L740.0 759.7 L744.4 762.5 L742.9 768.1 L740.0 768.8 L736.4 763.2 Z M817.9 802.7 L815.7 806.5 L817.2 810.3 L812.8 817.9 L811.4 822.8 L813.5 822.8 L815.7 817.9 L820.8 810.3 L818.6 807.1 L824.5 804.6 Z M808.4 915.6 L803.3 918.7 L801.2 924.9 L800.4 929.0 L804.8 943.1 L810.6 952.5 L815.7 959.8 L819.7 966.6 L825.5 968.9 L821.9 969.4 L818.6 973.2 L817.9 978.9 L815.0 986.8 L815.0 991.0 L850.7 991.0 L850.7 985.5 L848.5 978.9 L845.6 978.0 L844.1 977.0 L847.0 972.8 L844.8 972.3 L843.4 966.6 L843.4 960.8 L844.1 961.7 L855.8 964.6 L857.2 957.9 L852.1 951.0 L844.1 955.9 L841.2 955.4 L840.8 949.1 L842.7 945.6 L836.8 941.1 L832.5 941.6 L831.4 936.6 L828.8 931.0 L824.8 928.0 L829.6 926.5 L832.5 927.0 L830.3 922.9 L834.6 919.3 L841.2 918.7 L844.8 919.8 L851.4 920.3 L859.8 920.8 L854.3 915.6 L846.3 911.4 L846.3 906.2 L844.8 903.0 L841.2 902.4 L833.9 903.0 L826.6 905.1 L819.4 907.7 L815.7 908.8 L812.8 912.5 Z M885.6 920.8 L888.2 916.7 L888.5 922.9 L887.8 930.0 L885.6 929.0 Z M898.0 905.6 L906.0 906.7 L904.5 909.3 L899.4 907.7 Z M893.6 912.5 L896.2 914.1 L897.3 924.9 L895.1 932.6 L892.9 929.0 L892.2 920.8 Z M888.5 912.5 L892.2 910.4 L890.7 914.1 Z" fill="#bfdfff"/><path d="M394.6 954.0 L399.3 952.0 L400.0 954.9 L411.0 953.5 L413.9 956.9 L408.8 962.7 L409.5 968.9 L408.0 975.1 L404.4 975.6 L408.0 980.8 L406.6 985.5 L408.0 989.2 M445.9 939.3 L448.8 942.6 L453.9 944.1 L464.1 945.6 L469.6 947.1 L471.7 948.1 L477.2 949.5 L481.9 948.8 M477.6 856.6 L480.1 860.9 L483.0 863.2 L489.6 865.5 L489.2 869.2 L494.3 867.2 L494.3 871.2 L501.2 874.0 L505.4 874.9 L510.0 877.9 L518.7 880.5 L515.8 885.7 L514.3 891.1 L514.3 895.5 L510.0 897.6 L503.4 906.2 L503.8 910.9 L508.9 908.3 L510.3 913.3 L507.4 921.8 L510.0 925.9 L509.2 929.5 L515.1 931.6 L513.6 935.3 M483.4 853.2 L489.9 853.2 L495.4 852.0 L501.6 855.7 L500.5 860.4 L502.7 860.4 L505.6 865.0 L503.8 867.2 L506.3 871.2 L505.4 874.9 M503.8 867.2 L500.9 870.6 L501.2 874.0 M502.7 860.4 L503.4 855.2 L502.7 847.6 L508.5 846.1 L510.3 842.8 L510.3 838.0 L511.4 830.8 M522.0 810.3 L527.8 811.3 M562.4 822.8 L563.8 830.2 L562.0 835.6 L565.3 839.2 L566.4 845.2 L565.3 848.1 L568.2 854.0 L566.7 859.0 L563.1 857.5 L557.3 860.9 L552.9 864.4 L548.5 866.1 L547.1 865.5 L550.0 869.5 L550.0 872.9 L553.6 876.8 L559.5 882.7 L556.6 886.8 L551.8 890.0 L553.6 892.8 L554.0 896.5 L547.8 895.5 L539.1 897.6 L535.1 896.0 L533.3 898.7 L528.9 896.0 L521.6 894.4 L514.3 895.5 M528.9 896.0 L528.5 900.8 L535.1 903.5 L532.5 908.3 L526.7 907.7 L524.5 914.1 L520.5 908.3 L516.1 913.3 L510.3 913.3 M535.1 903.5 L540.5 902.2 L547.8 901.4 L549.3 905.1 L558.7 907.0 L565.3 908.3 L572.9 905.1 L576.2 903.5 L579.1 898.7 L583.5 894.4 L583.9 891.1 L582.4 884.6 L576.2 882.9 L568.2 880.1 L566.0 884.6 L559.5 882.7 M558.7 907.0 L556.6 910.4 L558.0 913.5 L559.5 916.7 M558.0 918.0 L565.3 917.7 L570.4 917.7 L573.3 914.1 L572.9 910.4 L577.7 907.2 L579.5 907.2 L584.9 912.5 L590.0 914.6 L596.6 913.3 L606.4 911.1 M576.2 903.5 L579.5 907.2 M566.7 859.0 L570.4 859.8 L575.5 862.1 L578.0 861.5 L580.6 867.8 L587.9 865.5 L596.2 874.3 L601.0 873.4 L605.3 877.9 L611.9 875.7 L623.2 879.3 L624.3 873.4 L631.5 864.4 L634.4 859.2 L630.8 851.7 L630.8 844.6 L627.9 842.2 L633.0 837.4 L630.1 822.2 L625.0 817.1 L601.7 816.0 M596.2 874.3 L590.8 879.6 L584.2 881.8 L582.4 884.6 M583.9 891.1 L595.1 893.3 L603.9 889.5 L608.2 885.7 L617.0 887.3 L620.3 886.8 L623.2 879.3 M625.0 817.1 L623.5 809.7 L619.2 808.4 L614.1 805.9 M630.1 822.2 L636.6 822.8 L645.4 817.9 L646.8 810.3 L652.6 805.2 L652.6 800.5 L659.9 798.8 L663.9 794.2 L660.7 779.0 L658.1 775.6 L661.4 771.5 L658.8 761.1 L660.7 755.5 L664.3 749.8 M612.2 795.3 L619.2 791.0 L626.4 792.3 L635.2 792.9 L641.0 791.0 L652.6 800.5 M636.3 771.2 L643.2 768.8 L651.9 775.6 L658.1 775.6 M663.9 794.2 L678.9 798.1 L684.0 801.4 L683.2 811.6 L690.5 821.0 L697.1 828.4 L687.6 831.4 L690.5 844.6 L681.8 854.0 L672.3 852.8 L657.0 850.5 L643.2 847.0 L630.8 851.7 M690.5 844.6 L705.1 841.6 L709.4 848.1 L716.7 856.9 L718.2 864.4 L732.0 865.5 L735.6 870.1 L750.9 873.4 L748.0 891.1 L748.7 892.8 L737.8 896.0 L737.1 900.8 M620.3 886.8 L625.7 891.1 L637.4 891.7 L652.6 888.4 L661.4 886.2 L670.8 891.7 L677.0 904.0 L678.1 908.3 L669.8 912.5 L664.3 918.0 L674.5 919.8 M652.6 888.4 L659.2 896.5 L663.6 904.0 L664.3 918.0 M625.7 891.1 L619.2 897.6 L613.3 908.3 L606.4 911.1 L615.5 920.8 L614.8 924.9 L622.8 925.9 L624.3 931.0 L626.4 935.1 L644.6 936.6 L655.6 932.1 L667.1 935.7 M624.3 931.0 L622.1 936.1 L626.4 941.6 L622.1 949.1 L621.7 950.0 L626.4 955.4 L626.1 959.3 L635.9 957.4 L643.2 960.3 L650.8 955.9 L657.7 952.0 L662.8 953.0 M650.8 955.9 L652.6 959.3 L648.6 965.1 M596.6 913.3 L598.0 919.3 L597.3 924.2 L590.0 921.8 L582.0 920.3 L575.5 920.8 L573.7 924.9 L576.9 931.0 L584.2 938.6 L587.5 943.1 L593.3 947.6 M597.3 924.2 L599.9 929.0 L598.0 930.0 L601.7 933.6 L598.8 938.1 L595.1 941.1 L593.3 947.6 M598.8 938.1 L607.1 944.6 L610.4 940.6 L614.8 944.6 L617.3 946.6 L615.5 950.5 M600.0 954.5 L601.7 947.6 L605.0 947.6 L607.1 944.6 M605.0 947.6 L609.0 954.0 L608.2 959.8 L611.5 963.7 L606.8 974.2 L604.6 975.1 M611.5 963.7 L619.2 961.3 L626.1 959.3 M609.0 954.0 L615.5 950.5 L621.7 950.0 M539.8 754.1 L544.9 751.3 L544.2 742.6 L550.0 738.3 L548.5 726.4 L552.5 721.1 L547.8 715.8 L547.1 706.5 L547.1 699.0 L547.8 693.8 M661.4 733.1 L670.1 723.4 L677.4 712.7 L686.1 703.3 L688.3 697.0 M406.2 808.4 L404.0 812.2 L399.7 816.0 L404.0 820.0 L408.0 816.6 L410.6 821.0 L413.5 820.4 M750.2 939.1 L764.8 941.1 L775.7 944.6 L783.0 946.1 L791.7 948.1 L797.2 954.0 L803.3 959.8 L807.7 960.8 L812.8 954.5 M761.5 957.7 L768.4 958.4 L775.3 961.7 L786.6 959.8 L798.2 961.7 L797.2 954.0 M775.3 961.7 L777.1 971.3 L785.1 975.1 L782.2 978.0 L781.5 985.5 L781.5 989.2 M786.6 959.8 L791.0 964.6 L793.2 970.4 L797.5 977.0 L797.9 982.8 M785.1 975.1 L793.9 982.7 L797.9 982.8 L807.0 975.1 L810.6 978.0 L808.4 981.7 L815.0 986.8 M981.7 821.0 L978.8 819.5 L978.8 813.7 L976.7 806.4 L972.3 807.2 L967.9 804.3 L961.4 804.3 L956.3 807.9 L956.3 810.1 L937.5 814.4 L936.0 816.6 L925.8 819.5 L915.7 822.4 L914.2 821.0 L907.0 821.7 L904.8 823.9 L905.5 827.5 L908.4 827.5 L907.0 829.7 L911.3 832.6 L912.8 834.8 L905.5 834.8 L902.6 838.4 L904.8 842.0 L905.5 842.0 L898.2 845.6 L901.2 849.3 L908.4 853.6 L909.9 856.5 L908.4 860.9 L899.7 861.6 L896.8 860.1 L895.3 863.1 L889.5 860.9 L885.2 855.8 L877.9 858.0 L872.1 857.2 L866.3 863.1 L860.5 859.4 L857.6 863.1 L856.1 858.7 L847.4 852.2 L843.1 852.2 L840.2 849.3 L835.8 852.2 L831.5 848.5 L827.1 850.7 L824.2 854.3 L814.0 860.9 L816.2 868.9 L812.6 871.0 L806.8 864.5 L801.0 872.5 L801.7 878.3 L798.8 885.6 L803.9 892.8 L809.7 894.3 L816.2 901.5 L814.0 906.6 L820.6 911.7 M867.8 961.1 L867.8 924.0 L886.6 917.5 L905.5 930.6 L912.8 938.6 L933.1 937.1 L941.1 945.1 L941.8 949.4 M842.4 956.0 L847.4 952.3 L855.4 950.2 L864.1 961.1 L875.7 961.1 L875.7 955.2 L883.7 948.0 L887.4 946.5 M904.1 961.8 L909.9 964.0 L914.2 971.2 L921.5 977.0 L931.6 979.9 L944.7 985.0 M981.7 945.8 L976.7 952.3 L972.3 958.2 L963.6 962.5 L956.3 965.4 L960.7 968.3 L966.5 971.2 L981.7 969.8" fill="none" stroke="#6f6f6f" stroke-width="1" stroke-linejoin="round"/><text class="h" transform="translate(489.6 730.2) scale(0.987 1)">Norwegen</text><text class="f" transform="translate(489.6 730.2) scale(0.987 1)">Norwegen</text><text class="h" transform="translate(620.6 716.4) scale(0.972 1)">Finnland</text><text class="f" transform="translate(620.6 716.4) scale(0.972 1)">Finnland</text><text class="h" transform="translate(415.3 807.9) scale(0.988 1)">Vereinigtes</text><text class="f" transform="translate(415.3 807.9) scale(0.988 1)">Vereinigtes</text><text class="h" transform="translate(417.3 823.9) scale(0.960 1)">Königreich</text><text class="f" transform="translate(417.3 823.9) scale(0.960 1)">Königreich</text><text class="h" transform="translate(496.2 801.4) scale(0.973 1)">Dänemark</text><text class="f" transform="translate(496.2 801.4) scale(0.973 1)">Dänemark</text><text class="h" transform="translate(369.0 838.1) scale(0.996 1)">Irland</text><text class="f" transform="translate(369.0 838.1) scale(0.996 1)">Irland</text><text class="h" transform="translate(483.4 855.8) scale(0.965 1)">Deutschland</text><text class="f" transform="translate(483.4 855.8) scale(0.965 1)">Deutschland</text><text class="h" transform="translate(575.3 840.6) scale(0.998 1)">Polen</text><text class="f" transform="translate(575.3 840.6) scale(0.998 1)">Polen</text><text class="h" transform="translate(637.0 826.8) scale(0.957 1)">Belarus</text><text class="f" transform="translate(637.0 826.8) scale(0.957 1)">Belarus</text><text class="h" transform="translate(660.7 877.6) scale(0.973 1)">Ukraine</text><text class="f" transform="translate(660.7 877.6) scale(0.973 1)">Ukraine</text><text class="h" transform="translate(525.6 894.3) scale(0.963 1)">Österreich</text><text class="f" transform="translate(525.6 894.3) scale(0.963 1)">Österreich</text><text class="h" transform="translate(439.1 911.7) scale(0.971 1)">Frankreich</text><text class="f" transform="translate(439.1 911.7) scale(0.971 1)">Frankreich</text><text class="h" transform="translate(605.4 920.4) scale(0.976 1)">Rumänien</text><text class="f" transform="translate(605.4 920.4) scale(0.976 1)">Rumänien</text><text class="h" transform="translate(525.9 945.8) scale(1.001 1)">Italien</text><text class="f" transform="translate(525.9 945.8) scale(1.001 1)">Italien</text><text class="h" transform="translate(408.4 966.9) scale(0.971 1)">Spanien</text><text class="f" transform="translate(408.4 966.9) scale(0.971 1)">Spanien</text><text class="h" transform="translate(577.8 982.8) scale(0.959 1)">Griechenland</text><text class="f" transform="translate(577.8 982.8) scale(0.959 1)">Griechenland</text><text class="h" transform="translate(695.6 988.2) scale(0.975 1)">Türkei</text><text class="f" transform="translate(695.6 988.2) scale(0.975 1)">Türkei</text><text class="h" transform="translate(887.0 959.3) scale(0.969 1)">Usbekistan</text><text class="f" transform="translate(887.0 959.3) scale(0.969 1)">Usbekistan</text><text class="h" transform="translate(842.3 988.2) scale(0.980 1)">Turkmenistan</text><text class="f" transform="translate(842.3 988.2) scale(0.980 1)">Turkmenistan</text><text class="h" transform="translate(910.8 894.6) scale(0.937 1)">Kasachstan</text><text class="f" transform="translate(910.8 894.6) scale(0.937 1)">Kasachstan</text><text class="h" transform="translate(966.3 964.7) scale(0.93 1)">Kirgisistan</text><text class="f" transform="translate(966.3 964.7) scale(0.93 1)">Kirgisistan</text></g><g><rect x="38.5" y="711.5" width="41" height="82" rx="1.2" fill="#fff" stroke="#b4b4b4" stroke-width="1"/><path d="M38.5 752.3 H79.5" stroke="#8e8e8e" stroke-width="1"/><rect x="51.9" y="730.5" width="14.4" height="3.6" rx="0.9" fill="#2e2e2e"/><rect x="57.3" y="725.1" width="3.6" height="14.4" rx="0.9" fill="#2e2e2e"/><rect x="52.8" y="771.6" width="12.8" height="3.5" rx="0.9" fill="#2e2e2e"/></g><g><rect x="928.5" y="711.5" width="40.5" height="41" rx="1.2" fill="#fff" stroke="#c2c2c2" stroke-width="1"/><path d="M939.1 722.3 L946.5 723.1 L944.3 725.2 L947.4 728.3 L945.1 730.6 L942.0 727.5 L939.9 729.7 Z M939.1 741.1 L946.5 740.3 L944.3 738.2 L947.4 735.1 L945.1 732.8 L942.0 735.9 L939.9 733.7 Z M958.3 722.3 L950.9 723.1 L953.1 725.2 L950.0 728.3 L952.3 730.6 L955.4 727.5 L957.5 729.7 Z M958.3 741.1 L950.9 740.3 L953.1 738.2 L950.0 735.1 L952.3 732.8 L955.4 735.9 L957.5 733.7 Z" fill="#333"/></g></svg>
</main>
</body></html>
